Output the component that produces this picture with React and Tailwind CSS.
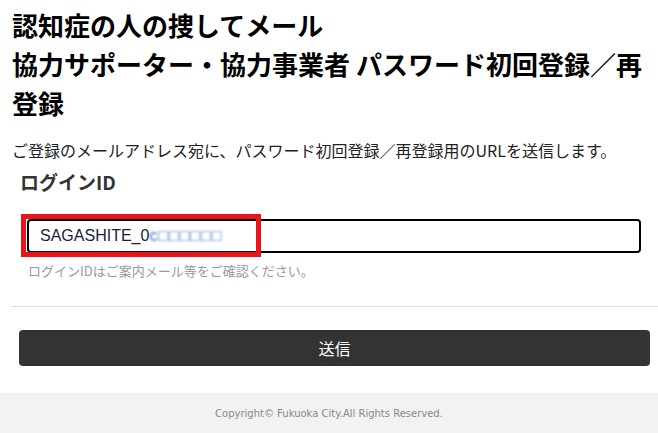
import React from 'react'

const jp = { fontFamily: '"Meiryo", "Noto Sans CJK JP", sans-serif' }

export default function App() {
  return (
    <div className="min-h-[433px] flex flex-col bg-white text-[#222]" style={jp}>
      <div className="flex-1">
        {/* Title */}
        <h1 className="pl-3 pr-2 pt-[5px] text-[26px] font-bold leading-[39px] text-black">
          認知症の人の捜してメール
          <br />
          協力サポーター・協力事業者 パスワード初回登録／再登録
        </h1>

        <p className="pl-3 mt-[18px] text-[16px] leading-[20px] text-[#222] whitespace-nowrap">
          ご登録のメールアドレス宛に、パスワード初回登録／再登録用のURLを送信します。
        </p>

        <div className="pl-5 mt-[11px] text-[19px] font-bold leading-[22px] text-[#333]">ログインID</div>

        {/* Input */}
        <div className="relative ml-[27px] mr-[17px] mt-[26px]">
          <div className="h-[34px] border-2 border-black rounded-[4px] flex items-center pl-[11px] text-[16px] text-[#1a2238]"
            style={{ fontFamily: '"Liberation Sans", Arial, sans-serif' }}>
            <span>SAGASHITE_0</span>
            <span className="blur-[1.2px] text-[#3d6fbf] tracking-[1px]">c□□□□□□</span>
          </div>
          {/* highlight box */}
          <div className="absolute left-[-6px] top-[-5px] w-[240px] h-[43px] border-[5px] border-[#e8141c]" />
        </div>

        <p className="pl-7 mt-[10px] text-[13px] leading-[16px] text-[#999]">
          ログインIDはご案内メール等をご確認ください。
        </p>

        <div className="ml-[11px] mt-[27px] h-px bg-[#dddddd]" />

        {/* Submit */}
        <div className="pl-[19px] pr-2 mt-[23px]">
          <button className="w-full h-[36px] bg-[#333333] rounded-[4px] text-white text-[16px] leading-[36px]">
            送信
          </button>
        </div>
      </div>

      <footer className="mt-[25px] h-[40px] bg-[#f2f2f2] flex items-center justify-center text-[10px] text-[#888]"
        style={{ fontFamily: '"DejaVu Sans", Verdana, sans-serif' }}>
        Copyright© Fukuoka City.All Rights Reserved.
      </footer>
    </div>
  )
}
